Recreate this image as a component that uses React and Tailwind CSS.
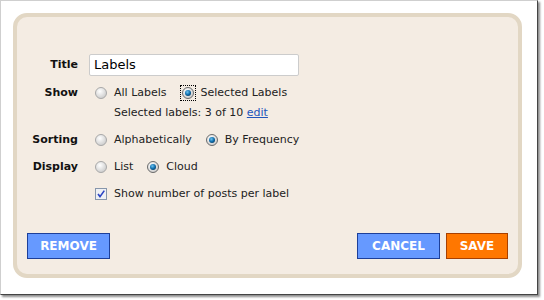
import React from 'react';

function Radio({ checked, focused }) {
  return (
    <span className={focused ? 'inline-flex items-center justify-center w-[14px] h-[14px] outline-1 outline-dotted outline-black' : 'inline-flex items-center justify-center w-[12px] h-[12px]'}>
      <svg width="12" height="12" viewBox="0 0 12 12">
        <defs>
          <radialGradient id="rg" cx="40%" cy="35%" r="70%">
            <stop offset="0%" stopColor="#ffffff" />
            <stop offset="100%" stopColor="#c9c9c9" />
          </radialGradient>
          <radialGradient id="dot" cx="40%" cy="35%" r="70%">
            <stop offset="0%" stopColor="#6ec3f0" />
            <stop offset="60%" stopColor="#0f6fae" />
            <stop offset="100%" stopColor="#083e66" />
          </radialGradient>
        </defs>
        <circle cx="6" cy="6" r="5.5" fill="url(#rg)" stroke={checked ? '#6b6b6b' : '#a8a8a8'} strokeWidth="1" />
        {checked && <circle cx="6" cy="6" r="3" fill="url(#dot)" />}
      </svg>
    </span>
  );
}

function Option({ checked, focused, label }) {
  return (
    <span className="inline-flex items-center mr-[14px]">
      <Radio checked={checked} focused={focused} />
      <span className={focused ? 'ml-[6px]' : 'ml-[7px]'}>{label}</span>
    </span>
  );
}

export default function App() {
  return (
    <div className="bg-white w-[544px] h-[300px]" style={{ fontFamily: '"DejaVu Sans", "Liberation Sans", sans-serif' }}>
      <div className="w-[538px] h-[295px] bg-white border-t border-l border-[#cfcfcf] border-r border-b border-r-[#444] border-b-[#444] shadow-[2px_2px_2px_rgba(0,0,0,0.45)] pl-[12px] pt-[12px]">
        <div className="w-[509px] h-[265px] bg-[#f4ece3] border-[4px] border-[#e2d7c4] rounded-[14px] flex flex-col px-[10px] pb-[15px] pt-[37px] text-[11px] text-[#222]">
          <div className="flex flex-col gap-[7px]">
            <div className="flex items-center">
              <div className="w-[51px] text-right font-bold text-[#111]">Title</div>
              <div className="ml-[11px] w-[210px] h-[22px] bg-white border border-[#cccccc] rounded-[2px] flex items-center pl-[4px] text-[13px] text-black">
                Labels
              </div>
            </div>
            <div className="flex">
              <div className="w-[51px] h-[20px] leading-[20px] text-right font-bold text-[#111]">Show</div>
              <div className="ml-[17px]">
                <div className="h-[20px] flex items-center">
                  <Option label="All Labels" />
                  <Option checked focused label="Selected Labels" />
                </div>
                <div className="h-[20px] leading-[20px] pl-[19px]">
                  Selected labels: 3 of 10 <a className="text-[#2255bb] underline">edit</a>
                </div>
              </div>
            </div>
            <div className="flex">
              <div className="w-[51px] h-[20px] leading-[20px] text-right font-bold text-[#111]">Sorting</div>
              <div className="ml-[17px] h-[20px] flex items-center">
                <Option label="Alphabetically" />
                <Option checked label="By Frequency" />
              </div>
            </div>
            <div className="flex">
              <div className="w-[51px] h-[20px] leading-[20px] text-right font-bold text-[#111]">Display</div>
              <div className="ml-[17px] h-[20px] flex items-center">
                <Option label="List" />
                <Option checked label="Cloud" />
              </div>
            </div>
            <div className="flex">
              <div className="w-[51px]" />
              <div className="ml-[17px] h-[20px] flex items-center">
                <svg width="12" height="12" viewBox="0 0 12 12">
                  <rect x="0.5" y="0.5" width="11" height="11" fill="#eef0f4" stroke="#8796ab" />
                  <path d="M3 6 L5 8.6 L9.3 2.6" fill="none" stroke="#2a44c4" strokeWidth="1.6" />
                </svg>
                <span className="ml-[7px]">Show number of posts per label</span>
              </div>
            </div>
          </div>
          <div className="mt-auto flex items-center">
            <button className="w-[83px] h-[26px] bg-[#6699ff] border border-[#1d3f99] text-white font-bold text-[12px]">REMOVE</button>
            <div className="ml-auto flex gap-[6px]">
              <button className="w-[83px] h-[26px] bg-[#6699ff] border border-[#1d3f99] text-white font-bold text-[12px]">CANCEL</button>
              <button className="w-[62px] h-[26px] bg-[#ff7700] border border-[#a84000] text-white font-bold text-[12px]">SAVE</button>
            </div>
          </div>
        </div>
      </div>
    </div>
  );
}
